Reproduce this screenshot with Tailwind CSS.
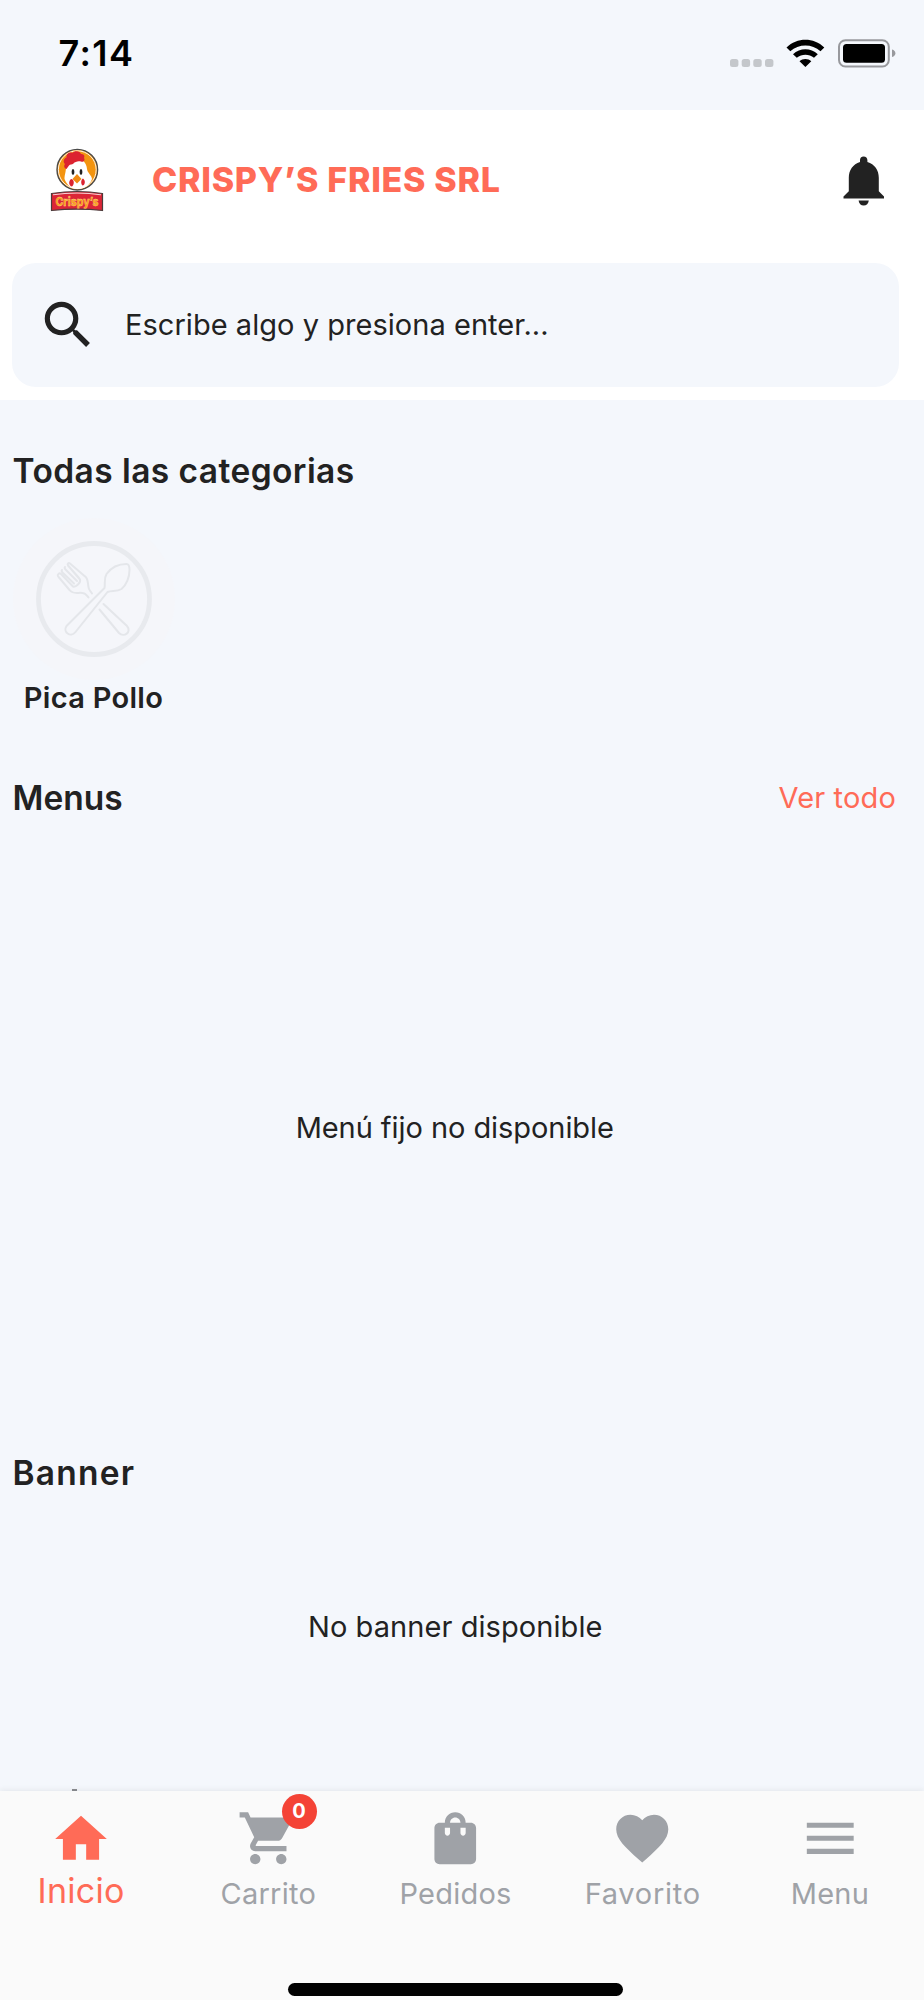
<!DOCTYPE html>
<html lang="es">
<head>
<meta charset="utf-8">
<title>Crispy’s Fries SRL</title>
<script src="https://cdn.jsdelivr.net/npm/@tailwindcss/browser@4"></script>
</head>
<body class="bg-[#f4f7fc]">
<div class="flex h-[2000px] w-[924px] flex-col overflow-hidden bg-[#f4f7fc] font-['Inter',sans-serif] text-[29px] leading-9 text-[#222222]">

  <!-- Status bar -->
  <div class="flex h-[110px] shrink-0 items-center justify-between pr-[28px] pl-[58.5px] text-black">
    <span class="-mt-[4px] text-[36px] leading-10 font-semibold tracking-[1.42px]">7:14</span>
    <svg class="mt-[-4px] h-[32px] w-[168px]" viewBox="728 37 168 32">
      <g fill="#c4c7cb"><rect x="730" y="59" width="8.4" height="8" rx="2.5"/><rect x="741.7" y="59" width="8.4" height="8" rx="2.5"/><rect x="753.3" y="59" width="8.4" height="8" rx="2.5"/><rect x="765" y="59" width="8.4" height="8" rx="2.5"/></g>
      <path d="M786.5 47.5l3.8 3.7c8.5-7.7 21.7-7.7 30.2 0l3.8-3.7c-10.6-10.3-27.2-10.3-37.8 0z"/>
      <path d="M793 54.2l3.8 3.6c4.9-4.2 12.3-4.2 17.2 0l3.8-3.6c-7-6.6-17.8-6.6-24.8 0z"/>
      <path d="M799.5 61.2l5.9 5.7 5.9-5.7c-3.2-3.1-8.6-3.1-11.8 0z"/>
      <rect x="839" y="40.2" width="49.8" height="26.3" rx="6.5" fill="none" stroke="#98999d" stroke-width="2"/>
      <rect x="843" y="44" width="42" height="18.7" rx="3.5"/>
      <path d="M892 49.5c4.5 1 4.5 6.5 0 7.5z" fill="#98999d"/>
    </svg>
  </div>

  <!-- Header -->
  <header class="flex h-[290px] shrink-0 flex-col bg-white pt-[37px] pr-[25px] pb-[13px] pl-3">
    <div class="flex h-[66px] items-center pr-[14px] pl-[38px]">
      <svg class="h-[66px] w-[54px] shrink-0" viewBox="50 147 54 66">
        <circle cx="77.3" cy="169.7" r="20.3" fill="#f39410" stroke="#4a4a4a" stroke-width="1.4"/>
        <circle cx="77.3" cy="169.7" r="18.9" fill="none" stroke="#fff" stroke-width="0.9"/>
        <path d="M64.500 179c0-4 1-5 1.500-11 .8-7 5-9 11-9s9.500 4 10 10c.5 4 4.500 6 5 10-2 6-8 10-14.500 10s-10.500-4-13-10z" fill="#fff"/>
        <path d="M66.500 169c-3-1-2.500-4-1.500-5-2.500-2-1-6 1.500-6.500-.5-4 3.500-6 6-4.500 2-3 8-2 8.500 1 3-.5 4 2 3 4 1.500 2-.5 4.500-3 3.500-3-.8-6 .2-7.500 2-1.500 1.500-3.500.5-4.500 2z" fill="#dc2330"/>
        <ellipse cx="73" cy="172" rx="1.400" ry="3" fill="#222"/><ellipse cx="81" cy="172" rx="1.400" ry="3" fill="#222"/>
        <path d="M71 179c3 0 4 5 1 7.500-3-.5-4-5-1-7.500zM83 178.500c3 2 2 7-.5 7-2-2-1.500-6 .5-7z" fill="#dc2330"/>
        <path d="M77 174l4.500 5-4.500 4.500-4.500-4.500z" fill="#f08a12"/>
        <path d="M51.500 193.500q26-4 51 0v17q-25-2.600-51 0z" fill="#dc2536" stroke="#4b3b3b" stroke-width="1.200"/>
        <path d="M53 194.800q24-3.500 48 0" fill="none" stroke="#fff" stroke-width=".8"/>
        <text x="77" y="205.500" text-anchor="middle" textLength="43" lengthAdjust="spacingAndGlyphs" font-family="Inter,sans-serif" font-weight="800" font-size="12" fill="#f9a01b" stroke="#ffd98a" stroke-width=".35">Crispy’s</text>
      </svg>
      <h1 class="ml-[48px] text-[34px] leading-10 font-extrabold tracking-[0.72px] text-[#ff6b57]">CRISPY’S FRIES SRL</h1>
      <svg class="mt-[1px] ml-auto h-[50px] w-[42px]" viewBox="843 155.5 42 50" fill="#222">
        <path d="M863.6 156c2.4 0 3.8 1.7 3.8 3.8v1.7c7.2 2.2 11.4 8 11.4 15.8v13.5l5.2 5.2v1.9H843.5v-1.9l5.3-5.2v-13.500c0-7.800 4.200-13.600 11.200-15.800v-1.700c0-2.100 1.300-3.800 3.600-3.800z"/>
        <path d="M858.6 200h10.200c-.3 3-2.300 5-5.100 5s-4.800-2-5.100-5z"/>
      </svg>
    </div>
    <div class="mt-auto flex h-[124px] items-center rounded-[24px] bg-[#f4f7fc] pl-[25px]">
      <svg class="size-[62px]" viewBox="0 0 24 24" fill="#222"><path d="M15.5 14h-.79l-.28-.27A6.471 6.471 0 0 0 16 9.5 6.5 6.5 0 1 0 9.5 16c1.61 0 3.09-.59 4.23-1.57l.27.28v.79l5 4.99L20.49 19l-4.99-5zm-6 0C7.01 14 5 11.99 5 9.5S7.01 5 9.5 5 14 7.01 14 9.5 11.99 14 9.5 14z"/></svg>
      <span class="ml-[26px] tracking-[0.04px]">Escribe algo y presiona enter...</span>
    </div>
  </header>

  <!-- Content -->
  <main class="flex min-h-0 flex-1 flex-col overflow-hidden pt-[51px] pr-[28px] pl-[12.5px]">
    <h2 class="text-[33.5px] leading-10 font-semibold tracking-[0.43px]">Todas las categorias</h2>

    <div class="mt-[26px] flex h-[200px] w-[162px] shrink-0 flex-col items-center">
      <svg class="size-[164px] shrink-0" viewBox="11.5 517 164 164" fill="none" stroke="#e4e6ea" stroke-width="2" stroke-linecap="round" stroke-linejoin="round">
        <circle cx="93.5" cy="599" r="81" fill="#f5f6fa" stroke="none"/>
        <circle cx="93.5" cy="599" r="55.5" stroke="#e8eaee" stroke-width="4.8"/>
        <path d="M104 588c1-5-1-9 2-14 5-7 13-10 20-10 3 0 3 3 3 6 0 7-3 15-8 19-5 3-10 1-14 3L75 632c-5 6-13 0-9-6z"/>
        <path d="M69.5 563.5c-1.5-1-3 .5-2 2l11 12.5M69.5 563.5L84 576c4 2 3 7 4 11 0 3 2 4 3.500 6.500M58 574c-1.500 1-.5 2.500.5 3.500L69 590c4 5 9 2 13 3 3 0 4 2 6 4.500M58 574c1.500-1.500 2.500 0 3.500 1l11 11.500c3 1 8-4 7-7L68 566M61.500 570c-1 1 0 2 1 3l11 10.500M64.500 567c-1 1 0 2 1 3L76.500 581"/>
        <path d="M103 604l23.500 22c5 6-3 12-8 7L99 609.500"/>
      </svg>
      <span class="mt-[-1px] whitespace-nowrap font-semibold tracking-[0.3px]">Pica Pollo</span>
    </div>

    <div class="mt-[61px] flex h-10 shrink-0 items-center justify-between">
      <h2 class="text-[33.5px] leading-10 font-semibold">Menus</h2>
      <a class="tracking-[0.16px] text-[#ff6b57]">Ver todo</a>
    </div>
    <div class="flex h-[619px] shrink-0 items-center justify-center pl-[1px]">
      <p class="tracking-[-0.06px]">Menú fijo no disponible</p>
    </div>

    <h2 class="mt-[16px] text-[33.5px] leading-10 font-semibold tracking-[1.25px]">Banner</h2>
    <div class="flex h-[268px] shrink-0 items-center justify-center pl-[2px]">
      <p class="tracking-[0.07px]">No banner disponible</p>
    </div>
    <div class="mt-auto ml-[59.5px] h-[2px] w-[5px] shrink-0 bg-[#8a8c90]"></div>
  </main>

  <!-- Bottom navigation -->
  <footer class="relative flex h-[209.5px] shrink-0 flex-col items-center bg-[#fafafa] pb-[4.5px] shadow-[0_-1px_6px_rgba(0,0,0,0.07)]">
    <nav class="-ml-[13px] grid w-[936px] grid-cols-5 text-[#9fa2a7]">
      <a class="flex flex-col items-center pt-[17px] text-[#ff6b57]">
        <svg class="size-[62px]" viewBox="0 0 24 24" fill="currentColor"><path d="M10 20v-6h4v6h5v-8h3L12 3 2 12h3v8z"/></svg>
        <span class="mt-[1px] text-[34px] leading-10 tracking-[0.28px]">Inicio</span>
      </a>
      <a class="flex flex-col items-center pt-[16.5px]">
        <span class="relative">
          <svg class="size-[62.5px]" viewBox="0 0 24 24" fill="currentColor"><path d="M7 18c-1.1 0-1.99.9-1.99 2S5.9 22 7 22s2-.9 2-2-.9-2-2-2zM1 2v2h2l3.6 7.59-1.35 2.45c-.16.28-.25.61-.25.96 0 1.1.9 2 2 2h12v-2H7.42c-.14 0-.25-.11-.25-.25l.03-.12.9-1.63h7.45c.75 0 1.41-.41 1.75-1.03l3.58-6.49A1.003 1.003 0 0 0 20 4H5.21l-.94-2H1zm16 16c-1.1 0-1.99.9-1.99 2s.89 2 1.99 2 2-.9 2-2-.9-2-2-2z"/></svg>
          <span class="absolute -top-[13.5px] left-[44.5px] flex size-[35px] items-center justify-center rounded-full bg-[#f44336] text-[20px] leading-none font-bold text-white">0</span>
        </span>
        <span class="mt-[6.5px] tracking-[0.26px]">Carrito</span>
      </a>
      <a class="flex flex-col items-center pt-[16.5px]">
        <svg class="size-[62.5px]" viewBox="0 0 24 24" fill="currentColor"><path fill-rule="evenodd" d="M18 6h-2c0-2.21-1.79-4-4-4S8 3.79 8 6H6c-1.1 0-2 .9-2 2v12c0 1.1.9 2 2 2h12c1.1 0 2-.9 2-2V8c0-1.1-.9-2-2-2zm-8 4c0 .55-.45 1-1 1s-1-.45-1-1V8h2v2zm2-6c1.1 0 2 .9 2 2h-4c0-1.1.9-2 2-2zm4 6c0 .55-.45 1-1 1s-1-.45-1-1V8h2v2z"/></svg>
        <span class="mt-[6.5px] tracking-[0.22px]">Pedidos</span>
      </a>
      <a class="flex flex-col items-center pt-[16.5px]">
        <svg class="size-[62.5px]" viewBox="0 0 24 24" fill="currentColor"><path d="M12 21.35l-1.45-1.32C5.4 15.36 2 12.28 2 8.5 2 5.42 4.42 3 7.5 3c1.74 0 3.41.81 4.5 2.09C13.09 3.81 14.76 3 16.5 3 19.58 3 22 5.42 22 8.5c0 3.78-3.4 6.86-8.55 11.54L12 21.35z"/></svg>
        <span class="mt-[6.5px] tracking-[0.72px]">Favorito</span>
      </a>
      <a class="flex flex-col items-center pt-[16.5px]">
        <svg class="size-[62.5px]" viewBox="0 0 24 24" fill="currentColor"><path d="M3 18h18v-2H3v2zm0-5h18v-2H3v2zm0-7v2h18V6H3z"/></svg>
        <span class="mt-[6.5px] tracking-[0.25px]">Menu</span>
      </a>
    </nav>
    <div class="mt-auto -ml-[13px] h-[13px] w-[335px] rounded-full bg-black"></div>
  </footer>
</div>
</body>
</html>
